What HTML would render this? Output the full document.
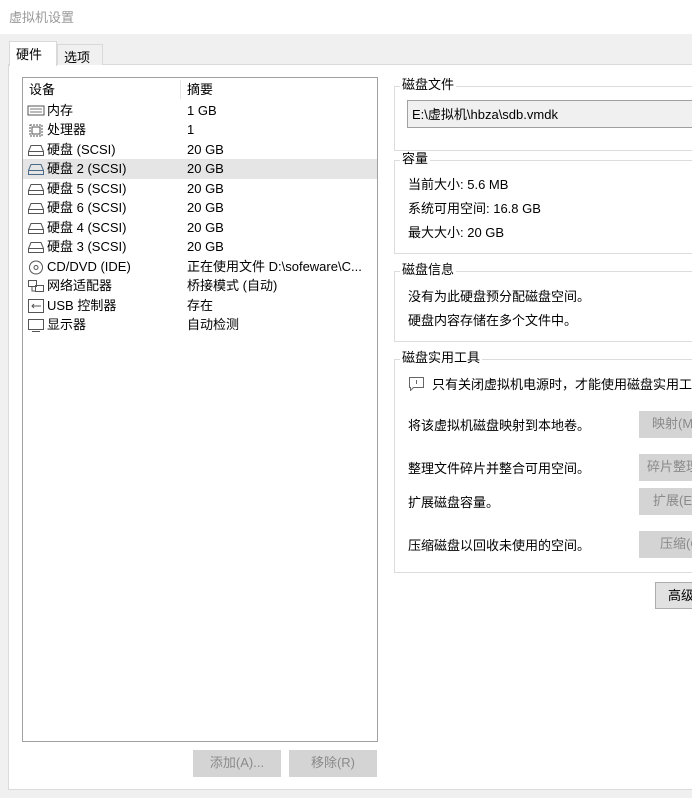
<!DOCTYPE html>
<html><head><meta charset="utf-8"><style>
*{margin:0;padding:0;box-sizing:border-box}
body{width:692px;height:798px;overflow:hidden;background:#f0f0f0;font-family:"Liberation Sans","Noto Sans CJK SC",sans-serif;font-size:13px;color:#000;position:relative}
.a{position:absolute;white-space:nowrap}
.title{left:0;top:0;width:692px;height:34px;background:#fff;color:#999;font-size:13px;padding:7px 0 0 9px}
.panel{left:8px;top:64px;width:684px;height:726px;background:#fff;border:1px solid #dadada;border-right:none}
.list{left:22px;top:77px;width:356px;height:665px;border:1px solid #a0a0a0;background:#fff}
.row{position:absolute;left:0;width:354px;height:19.5px;line-height:19.5px}
.row.sel{background:#e5e5e5}
.row svg{position:absolute;left:4px;top:3px}
.row .n{position:absolute;left:24px}
.row .v{position:absolute;left:164px}
.gb{position:absolute;border:1px solid #dcdcdc;border-right:none}
.gl{position:absolute;background:#fff;padding:0 2px;line-height:16px}
.btn{position:absolute;background:#d4d4d4;color:#8a8a8a;text-align:center;line-height:26px;height:27px}
</style></head><body>
<div class="a title">虚拟机设置</div>
<div class="a panel"></div>
<div class="a" style="left:57px;top:44px;width:46px;height:21px;background:#f0f0f0;border:1px solid #d9d9d9;border-bottom:none;padding:2px 0 0 6px">选项</div>
<div class="a" style="left:9px;top:41px;width:48px;height:25px;background:#fff;border:1px solid #d9d9d9;border-bottom:none;padding:2px 0 0 6px">硬件</div>

<div class="a list">
<div class="row" style="top:2px"><span class="n" style="left:6px">设备</span><span class="v">摘要</span></div>
<div style="position:absolute;left:157px;top:2px;width:1px;height:19px;background:#e5e5e5"></div>
<div class="row" style="top:22.5px"><svg width="18" height="13"><rect x="1" y="2" width="16" height="9" fill="none" stroke="#555"/><path d="M3 5h12M3 8h12" stroke="#777"/></svg><span class="n">内存</span><span class="v">1 GB</span></div>
<div class="row" style="top:42px"><svg width="18" height="14"><rect x="3" y="2" width="12" height="11" fill="none" stroke="#555" stroke-dasharray="2 1"/><rect x="5" y="4" width="8" height="7" fill="none" stroke="#555"/></svg><span class="n">处理器</span><span class="v">1</span></div>
<div class="row" style="top:61.5px"><svg width="18" height="14"><path d="M1.5 12.5V8.5L4 2.5h10l2.5 6v4z M1.5 8.5h15" fill="none" stroke="#555"/></svg><span class="n">硬盘 (SCSI)</span><span class="v">20 GB</span></div>
<div class="row sel" style="top:81px"><svg width="18" height="14"><path d="M1.5 12.5V8.5L4 2.5h10l2.5 6v4z M1.5 8.5h15" fill="none" stroke="#4a6a8a"/></svg><span class="n">硬盘 2 (SCSI)</span><span class="v">20 GB</span></div>
<div class="row" style="top:100.5px"><svg width="18" height="14"><path d="M1.5 12.5V8.5L4 2.5h10l2.5 6v4z M1.5 8.5h15" fill="none" stroke="#555"/></svg><span class="n">硬盘 5 (SCSI)</span><span class="v">20 GB</span></div>
<div class="row" style="top:120px"><svg width="18" height="14"><path d="M1.5 12.5V8.5L4 2.5h10l2.5 6v4z M1.5 8.5h15" fill="none" stroke="#555"/></svg><span class="n">硬盘 6 (SCSI)</span><span class="v">20 GB</span></div>
<div class="row" style="top:139.5px"><svg width="18" height="14"><path d="M1.5 12.5V8.5L4 2.5h10l2.5 6v4z M1.5 8.5h15" fill="none" stroke="#555"/></svg><span class="n">硬盘 4 (SCSI)</span><span class="v">20 GB</span></div>
<div class="row" style="top:159px"><svg width="18" height="14"><path d="M1.5 12.5V8.5L4 2.5h10l2.5 6v4z M1.5 8.5h15" fill="none" stroke="#555"/></svg><span class="n">硬盘 3 (SCSI)</span><span class="v">20 GB</span></div>
<div class="row" style="top:178.5px"><svg width="18" height="15"><circle cx="9" cy="7.5" r="6.5" fill="none" stroke="#555"/><circle cx="9" cy="7.5" r="2" fill="none" stroke="#555"/></svg><span class="n">CD/DVD (IDE)</span><span class="v">正在使用文件 D:\sofeware\C...</span></div>
<div class="row" style="top:198px"><svg width="18" height="14"><rect x="1.5" y="1.5" width="8" height="6" fill="none" stroke="#555"/><rect x="8.5" y="6.5" width="8" height="6" fill="none" stroke="#555"/><path d="M5 8v4h3" fill="none" stroke="#555"/></svg><span class="n">网络适配器</span><span class="v">桥接模式 (自动)</span></div>
<div class="row" style="top:217.5px"><svg width="18" height="14"><rect x="1.5" y="0.5" width="15" height="13" fill="none" stroke="#555"/><path d="M5 7h9M7 5l-2 2 2 2" fill="none" stroke="#555"/></svg><span class="n">USB 控制器</span><span class="v">存在</span></div>
<div class="row" style="top:237px"><svg width="18" height="14"><rect x="1.5" y="1.5" width="15" height="10" fill="none" stroke="#555"/><path d="M5 13.5h8" stroke="#555"/></svg><span class="n">显示器</span><span class="v">自动检测</span></div>
</div>

<div class="btn" style="left:193px;top:750px;width:88px">添加(A)...</div>
<div class="btn" style="left:289px;top:750px;width:88px">移除(R)</div>

<div class="gb" style="left:394px;top:86px;width:298px;height:65px"></div>
<div class="gl" style="left:400px;top:77px">磁盘文件</div>
<div class="a" style="left:407px;top:100px;width:285px;height:28px;background:#f0f0f0;border:1px solid #a0a0a0;border-right:none;padding:3px 0 0 4px">E:\虚拟机\hbza\sdb.vmdk</div>

<div class="gb" style="left:394px;top:160px;width:298px;height:94px"></div>
<div class="gl" style="left:400px;top:151px">容量</div>
<div class="a" style="left:408px;top:174px">当前大小: 5.6 MB</div>
<div class="a" style="left:408px;top:198px">系统可用空间: 16.8 GB</div>
<div class="a" style="left:408px;top:222px">最大大小: 20 GB</div>

<div class="gb" style="left:394px;top:271px;width:298px;height:71px"></div>
<div class="gl" style="left:400px;top:262px">磁盘信息</div>
<div class="a" style="left:408px;top:286px">没有为此硬盘预分配磁盘空间。</div>
<div class="a" style="left:408px;top:310px">硬盘内容存储在多个文件中。</div>

<div class="gb" style="left:394px;top:359px;width:298px;height:214px"></div>
<div class="gl" style="left:400px;top:350px">磁盘实用工具</div>
<svg class="a" style="left:409px;top:377px" width="16" height="14"><path d="M0.5 0.5h14v10h-10l-3 3v-3h-1z" fill="none" stroke="#666"/><path d="M7.5 3v4" stroke="#666"/></svg>
<div class="a" style="left:432px;top:374px">只有关闭虚拟机电源时，才能使用磁盘实用工具。</div>
<div class="a" style="left:408px;top:415px">将该虚拟机磁盘映射到本地卷。</div>
<div class="a" style="left:408px;top:458px">整理文件碎片并整合可用空间。</div>
<div class="a" style="left:408px;top:492px">扩展磁盘容量。</div>
<div class="a" style="left:408px;top:535px">压缩磁盘以回收未使用的空间。</div>
<div class="btn" style="left:639px;top:411px;width:80px;text-align:left;padding-left:13px">映射(M)</div>
<div class="btn" style="left:639px;top:454px;width:80px;text-align:left;padding-left:8px">碎片整理(D)</div>
<div class="btn" style="left:639px;top:488px;width:80px;text-align:left;padding-left:14px">扩展(E)...</div>
<div class="btn" style="left:639px;top:531px;width:80px;text-align:left;padding-left:21px">压缩(C)</div>
<div class="a" style="left:655px;top:582px;width:60px;height:27px;background:#e1e1e1;border:1px solid #adadad;line-height:25px;padding-left:12px">高级(V)...</div>
</body></html>
